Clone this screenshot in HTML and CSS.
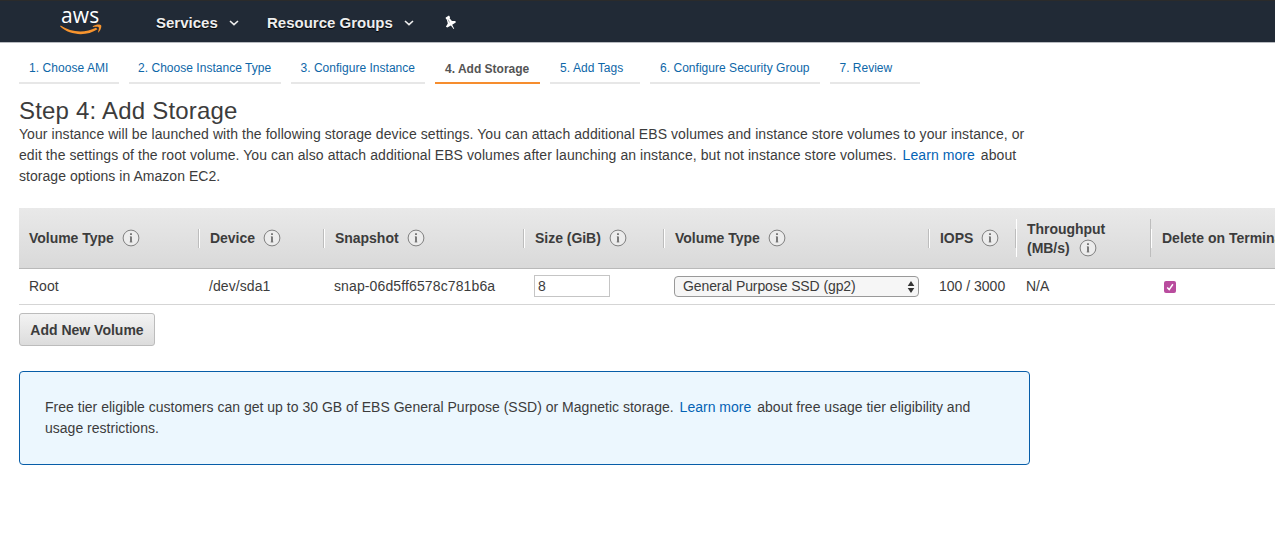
FILE: index.html
```html
<!DOCTYPE html>
<html lang="en">
<head>
<meta charset="utf-8">
<title>Step 4: Add Storage</title>
<link rel="stylesheet" href="styles.css">
</head>
<body>
<svg class="defs" width="0" height="0" aria-hidden="true">
  <symbol id="info" viewBox="0 0 18 18">
    <circle cx="9" cy="9" r="7.900" fill="#ececec" stroke="#808080" stroke-width="1"/>
    <path d="M9 4.300v1.700M9 7.500v5.700" stroke="#4a4a4a" stroke-width="1.400" fill="none"/>
    <path d="M7.800 7.700H9M7.500 13H10.500" stroke="#777" stroke-width=".5" fill="none"/>
  </symbol>
  <symbol id="chevron" viewBox="0 0 10 6"><path d="M1 1l4 3.600L9 1" fill="none" stroke="#eee" stroke-width="1.600"/></symbol>
</svg>
<header class="topbar">
  <div class="logo">
    <span class="logo-text">aws</span>
    <svg class="smile" viewBox="0 0 42 11" width="42" height="11"><path d="M.6 1.500C11 8.500 25 9.300 36 3.700L37.500 5.300C27 12.500 10 11.800.2 2.600z" fill="#f7942e"/><path d="M32.800 2.200C36 .2 40.200.2 41.100 1.200C41.900 2.500 40.500 7 38 8.700C38.200 6.800 39.400 4.200 38.700 3.200C37.900 2.300 35.200 2.800 32.800 2.900z" fill="#f7942e"/></svg>
  </div>
  <nav class="menu">
    <a class="menu-item services">Services<svg width="10" height="6"><use href="#chevron"/></svg></a>
    <a class="menu-item groups">Resource Groups<svg width="10" height="6"><use href="#chevron"/></svg></a>
    <svg class="pin" viewBox="0 0 14 15" width="14" height="15"><path d="M2.700 2.400L6 .4L7.100 2.200L6.600 3.200L8.900 6L12.400 5.900L12.800 7.600L9.200 9.700L11.200 13.800L10.600 14L7.900 10.500L4.300 12.600L2.900 11.700L4.800 8.500L3.800 4.500L2.900 4.100z" fill="#fff"/><path d="M5 4.500L6.600 7.500" stroke="#6b727b" stroke-width=".6"/></svg>
  </nav>
</header>
<nav class="steps">
  <a class="step s1"><span>1. Choose AMI</span></a>
  <a class="step s2"><span>2. Choose Instance Type</span></a>
  <a class="step s3"><span>3. Configure Instance</span></a>
  <a class="step s4 active"><span>4. Add Storage</span></a>
  <a class="step s5"><span>5. Add Tags</span></a>
  <a class="step s6"><span>6. Configure Security Group</span></a>
  <a class="step s7"><span>7. Review</span></a>
</nav>
<main>
  <h1>Step 4: Add Storage</h1>
  <p class="intro"><span class="l1">Your instance will be launched with the following storage device settings. You can attach additional EBS volumes and instance store volumes to your instance, or</span><br><span class="l2">edit the settings of the root volume. You can also attach additional EBS volumes after launching an instance, but not instance store volumes. <a class="learn">Learn more</a> about</span><br><span class="l3">storage options in Amazon EC2.</span></p>
  <section class="table">
    <div class="row head">
      <div class="th"><span>Volume Type</span><svg class="info"><use href="#info"/></svg></div>
      <div class="th"><span>Device</span><svg class="info"><use href="#info"/></svg></div>
      <div class="th"><span>Snapshot</span><svg class="info"><use href="#info"/></svg></div>
      <div class="th"><span>Size (GiB)</span><svg class="info"><use href="#info"/></svg></div>
      <div class="th"><span>Volume Type</span><svg class="info"><use href="#info"/></svg></div>
      <div class="th"><span>IOPS</span><svg class="info"><use href="#info"/></svg></div>
      <div class="th tall"><span>Throughput</span><div class="second"><span>(MB/s)</span><svg class="info"><use href="#info"/></svg></div></div>
      <div class="th last"><span>Delete on Termination</span></div>
    </div>
    <div class="row body">
      <div class="td">Root</div>
      <div class="td device">/dev/sda1</div>
      <div class="td snap">snap-06d5ff6578c781b6a</div>
      <div class="td"><div class="size">8</div></div>
      <div class="td"><div class="select"><span>General Purpose SSD (gp2)</span><svg width="8" height="12" viewBox="0 0 8 12"><path d="M4 0L7.300 5H.7zM4 12L.7 7H7.300z" fill="#333"/></svg></div></div>
      <div class="td">100 / 3000</div>
      <div class="td">N/A</div>
      <div class="td"><div class="check"><svg viewBox="0 0 12 12" width="12" height="12"><path d="M3.200 6.500L5.200 8.600L8.900 3.300" fill="none" stroke="#fff" stroke-width="1.500"/></svg></div></div>
    </div>
  </section>
  <button class="add">Add New Volume</button>
  <aside class="notice"><span class="n1">Free tier eligible customers can get up to 30 GB of EBS General Purpose (SSD) or Magnetic storage. <a class="learn">Learn more</a> about free usage tier eligibility and</span><br><span class="n2">usage restrictions.</span></aside>
</main>
</body>
</html>
```
FILE: styles.css
```css
* { box-sizing: border-box; }
body {
  margin: 0;
  height: 550px;
  overflow: hidden;
  background: #fff;
  color: #3c3c3c;
  font: 14px/21px "Liberation Sans", Arial, sans-serif;
}
.defs { position: absolute; }
svg { display: block; flex: none; }

.topbar {
  display: flex;
  height: 43px;
  padding-left: 60px;
  background: #212a36;
  border-top: 1px solid #2b2b2b;
  border-bottom: 1px solid #b8bbc0;
}
.logo { width: 42px; padding-top: 5px; }
.logo-text {
  display: block;
  height: 18px;
  padding-left: 1px;
  color: #fff;
  font: 500 21px/19px "Open Sans", sans-serif;
  letter-spacing: .1px;
}
.menu { display: flex; align-items: center; height: 43px; padding-left: 54px; }
.menu-item {
  display: flex;
  align-items: center;
  justify-content: space-between;
  color: #eee;
  font-size: 15px;
  font-weight: bold;
  text-shadow: 0 1px 1px #000;
}
.services { width: 83px; margin-right: 28px; }
.groups { width: 147px; }
.pin { margin: 0 0 1px 29px; }

.steps { display: flex; gap: 10px; padding-left: 19px; height: 41px; font-size: 12px; }
.step {
  flex: none;
  height: 41px;
  padding: 14px 0 0 10px;
  border-bottom: 2px solid #e7e7e7;
  color: #0e67a8;
  line-height: 22px;
  white-space: nowrap;
}
.s1 { width: 100px; letter-spacing: .06px; }
.s2 { width: 152px; padding-left: 9px; letter-spacing: .03px; }
.s3 { width: 134px; padding-left: 9.500px; letter-spacing: .02px; }
.s4 { width: 105px; }
.s5 { width: 90px; letter-spacing: .08px; }
.s6 { width: 170px; letter-spacing: .03px; }
.s7 { width: 90px; padding-left: 9.500px; }
.active { color: #545454; border-color: #f68d2e; font-weight: bold; padding-top: 15px; }

main { padding: 14px 0 0 19px; }
h1 { margin: 0; font-size: 24px; line-height: 26px; font-weight: normal; letter-spacing: .2px; }
.intro { margin: 0; white-space: nowrap; }
.l1, .l2 { letter-spacing: .07px; }
.l3 { letter-spacing: .04px; }
.n1, .n2 { letter-spacing: .015px; }
.learn { color: #0463b5; margin: 0 2px; }

.table { width: 1256px; margin-top: 21px; overflow: hidden; }
.row { display: grid; grid-template-columns: 180px 125px 200px 140px 265px 87px 135px 200px; align-items: center; }
.head {
  height: 61px;
  background: linear-gradient(#e9e9e9, #d9d9d9);
  border-bottom: 1px solid #b9b9b9;
  font-weight: bold;
}
.th {
  display: flex;
  align-items: center;
  gap: 8px;
  height: 19px;
  padding-left: 10px;
  border-left: 1px solid #fff;
  border-right: 1px solid #bdbdbd;
  line-height: 19px;
  letter-spacing: -.03px;
  white-space: nowrap;
}
.th:first-child { border-left: 0; }
.tall { display: block; height: 38px; padding-top: 1px; }
.second { display: flex; align-items: center; gap: 9px; height: 18px; }
.last { border-right: 0; letter-spacing: 0; }
.info { width: 18px; height: 18px; }
.body { height: 36px; border-bottom: 1px solid #d5d5d5; }
.td { padding-left: 10px; white-space: nowrap; }
.device { letter-spacing: .08px; }
.snap { letter-spacing: .12px; }
.size { width: 76px; height: 22px; margin-bottom: 1px; padding-left: 3px; border: 1px solid #c5c5c5; line-height: 21px; }
.select {
  display: flex;
  align-items: center;
  justify-content: space-between;
  width: 245px;
  height: 21px;
  padding: 0 3px 0 8px;
  border: 1px solid #999;
  border-radius: 4px;
  background: #f6f6f6;
  line-height: 19px;
  letter-spacing: -.1px;
}
.check { width: 12px; height: 12px; margin-left: 3px; border-radius: 2px; background: #b94c9e; }
.add {
  display: block;
  width: 136px;
  height: 33px;
  margin-top: 8px;
  padding: 2px 0 0;
  border: 1px solid #bcbcbc;
  border-radius: 3px;
  background: linear-gradient(#f3f3f3, #dcdcdc);
  color: #3c3c3c;
  font: bold 14px/21px "Liberation Sans", Arial, sans-serif;
}
.notice {
  width: 1011px;
  height: 94px;
  margin-top: 25px;
  padding: 25px;
  border: 1px solid #075da8;
  border-radius: 4px;
  background: #ecf7fe;
  white-space: nowrap;
}
```
